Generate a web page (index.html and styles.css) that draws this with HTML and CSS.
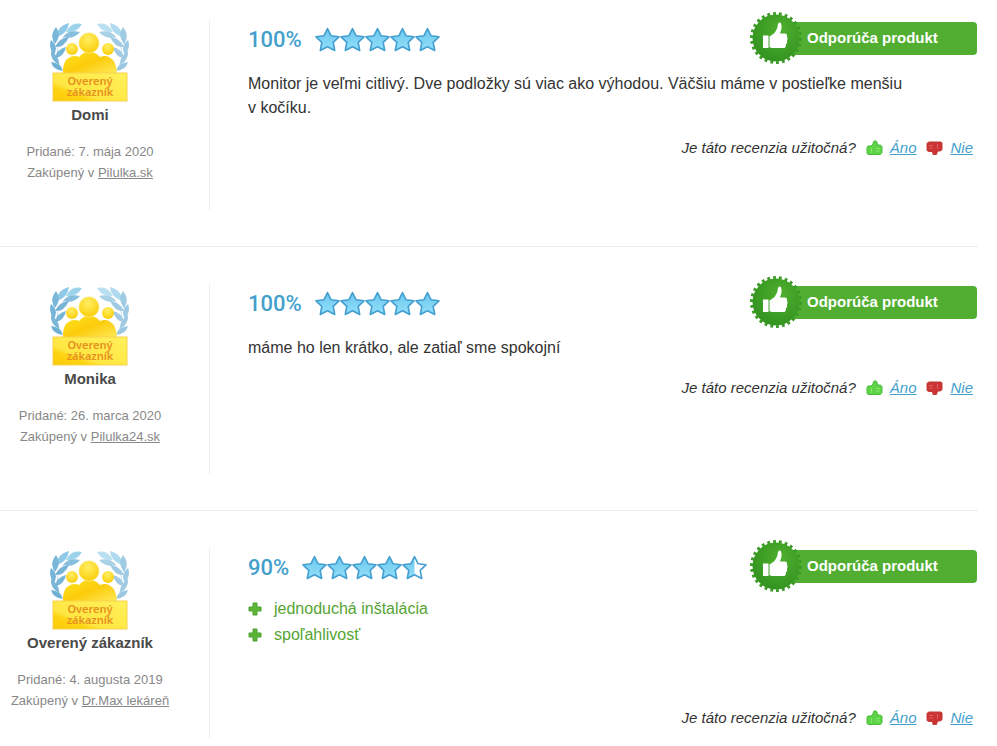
FILE: index.html
```html
<!DOCTYPE html>
<html lang="sk">
<head>
    <meta charset="UTF-8">
    <meta name="viewport" content="width=device-width, initial-scale=1.0">
    <title>Recenzie</title>
    <link rel="stylesheet" href="styles.css">
</head>
<body>
    <svg class="sprite" aria-hidden="true">
        <defs>
            <linearGradient id="star-fill" x1="0" y1="0" x2="0" y2="1">
                <stop offset="0" stop-color="#6cc6ec"/>
                <stop offset="1" stop-color="#93e0fb"/>
            </linearGradient>
            <radialGradient id="seal-fill" cx="0.6" cy="0.35" r="0.75">
                <stop offset="0" stop-color="#4fb02d"/>
                <stop offset="1" stop-color="#2f8f1f"/>
            </radialGradient>
            <radialGradient id="head-fill" cx="0.45" cy="0.3" r="0.8">
                <stop offset="0" stop-color="#ffef62"/>
                <stop offset="1" stop-color="#fbc900"/>
            </radialGradient>
            <linearGradient id="people-fill" x1="0" y1="0" x2="1" y2="1">
                <stop offset="0" stop-color="#ffe21c"/>
                <stop offset="0.5" stop-color="#fccc0c"/>
                <stop offset="1" stop-color="#ffe95a"/>
            </linearGradient>
            <linearGradient id="banner-fill" x1="0" y1="1" x2="1" y2="0">
                <stop offset="0" stop-color="#fcc808"/>
                <stop offset="0.25" stop-color="#fdd412"/>
                <stop offset="0.35" stop-color="#ffe743"/>
                <stop offset="1" stop-color="#fff05a"/>
            </linearGradient>
        </defs>

        <symbol id="star" viewBox="0 0 25 25">
            <path d="M12.500 1.500L16 8.700L24 9.800L18.200 15.300L19.700 23.500L12.500 19.700L5.300 23.500L6.800 15.300L1 9.800L9 8.700Z" fill="url(#star-fill)" stroke="#439fd0" stroke-width="1.600" stroke-linejoin="round"/>
        </symbol>
        <symbol id="star-half" viewBox="0 0 25 25">
            <path d="M12.500 1.500L16 8.700L24 9.800L18.200 15.300L19.700 23.500L12.500 19.700L5.300 23.500L6.800 15.300L1 9.800L9 8.700Z" fill="#fff"/>
            <path d="M12.500 1.500V19.700L5.300 23.500L6.800 15.300L1 9.800L9 8.700Z" fill="url(#star-fill)"/>
            <path d="M12.500 1.500L16 8.700L24 9.800L18.200 15.300L19.700 23.500L12.500 19.700L5.300 23.500L6.800 15.300L1 9.800L9 8.700Z" fill="none" stroke="#439fd0" stroke-width="1.600" stroke-linejoin="round"/>
        </symbol>

        <symbol id="seal" viewBox="0 0 54 54">
            <circle cx="27" cy="27" r="23.500" fill="none" stroke="#3a9a25" stroke-width="5" stroke-dasharray="0.480 0.520" pathLength="26"/>
            <circle cx="27" cy="27" r="23.500" fill="url(#seal-fill)"/>
            <path d="M14 24.500h5.500v12.500h-5.500zM20.500 25.500L25 22.500Q28.500 18.500 29 13Q30.500 10.500 32 12.500Q33.500 16 31 22.500H36.500Q38.500 23 38 25.500Q39 27.500 38 29.500Q38.500 32 37 33.500Q37 36.500 35.500 37H22.500L20.500 36Z" fill="#fff"/>
        </symbol>

        <symbol id="thumb-up" viewBox="0 0 17 16">
            <path d="M1 7.500L2 6H5L7 4L7.500 1.500Q9.500 -0.300 11 2L11.500 5H14.500L16 6.500V12.500L14.500 14.500H2.500L1 13.500Z" fill="#5fd348" stroke="#49bd3b"/>
            <path d="M5.500 8V13M10 8.500H14M10 11H14" stroke="#84e86b" fill="none"/>
        </symbol>
        <symbol id="thumb-down" viewBox="0 0 17 16">
            <path d="M1 8.500V3.500L2.500 2H15L16 3V9.500L14.500 11H11.500L10.500 14.500H7L6.500 11.500H3L1 10.500Z" fill="#cc3333" stroke="#c03a3a"/>
            <path d="M11.500 4V9M3 5.500H7M3 8H7" stroke="#e26060" fill="none"/>
        </symbol>
        <symbol id="plus" viewBox="0 0 14 14">
            <path d="M5 1H9V5H13V9H9V13H5V9H1V5H5Z" fill="#5cb537" stroke="#4fa030" stroke-linejoin="round"/>
        </symbol>

        <g id="laurel">
            <path d="M12 50Q-2 26 24 8" fill="none" stroke="#b8d8e8"/>
            <path d="M18 9Q23 2 32 4Q27 13 16 12Z" fill="#9ed3ec"/>
            <path d="M13 17Q19 9 30 12Q23 20 13 17Z" fill="#86bedc"/>
            <path d="M7 17Q7 6 19 3Q18 13 7 17Z" fill="#8ecae7"/>
            <path d="M5 24Q-1 16 6 7Q12 15 5 24Z" fill="#79b6d8"/>
            <path d="M5 27Q9 18 19 17Q14 28 5 27Z" fill="#78b4d6"/>
            <path d="M4 35Q-2 27 1 20Q9 26 4 35Z" fill="#76b5d9"/>
            <path d="M5 38Q7 29 16 27Q14 37 5 38Z" fill="#78b4d6"/>
            <path d="M9 45Q0 40 1 31Q9 36 9 45Z" fill="#79b6d8"/>
            <path d="M13 51Q3 50 1 42Q11 43 13 51Z" fill="#6fb0d2"/>
        </g>
        <symbol id="verified" viewBox="0 0 80 82">
            <use href="#laurel"/>
            <use href="#laurel" transform="matrix(-1 0 0 1 79 0)" opacity="0.700"/>
            <path d="M13 54Q12 41 20 37Q25 35 29 37Q33 32 39 32Q46 32 50 37Q55 35 59 37Q67 41 67 54Z" fill="url(#people-fill)"/>
            <circle cx="22" cy="29" r="6" fill="url(#head-fill)"/>
            <circle cx="58" cy="29" r="6" fill="url(#head-fill)"/>
            <circle cx="39" cy="23" r="10" fill="url(#head-fill)" stroke="#ffe66a"/>
            <rect x="3" y="53" width="74" height="28" fill="url(#banner-fill)" stroke="#f8d24a"/>
        </symbol>
    </svg>

    <main class="reviews">
        <article class="review">
            <aside class="author">
                <div class="author-badge">
                    <svg class="author-badge-icon"><use href="#verified"/></svg>
                    <span class="author-badge-label">Overený zákazník</span>
                </div>
                <h3 class="author-name">Domi</h3>
                <p class="author-info">Pridané: 7. mája 2020<br>Zakúpený v <a href="#">Pilulka.sk</a></p>
            </aside>
            <div class="content">
                <header class="review-header">
                    <div class="rating">
                        <strong class="percent">100%</strong>
                        <div class="stars">
                            <svg class="star"><use href="#star"/></svg>
                            <svg class="star"><use href="#star"/></svg>
                            <svg class="star"><use href="#star"/></svg>
                            <svg class="star"><use href="#star"/></svg>
                            <svg class="star"><use href="#star"/></svg>
                        </div>
                    </div>
                    <div class="recommend">
                        <svg class="seal"><use href="#seal"/></svg>
                        Odporúča produkt
                    </div>
                </header>
                <p class="text">Monitor je veľmi citlivý. Dve podložky sú viac ako výhodou. Väčšiu máme v postieľke menšiu v&nbsp;kočíku.</p>
                <div class="helpful">
                    <span>Je táto recenzia užitočná?</span>
                    <a class="vote" href="#"><svg class="thumb"><use href="#thumb-up"/></svg><span>Áno</span></a>
                    <a class="vote" href="#"><svg class="thumb"><use href="#thumb-down"/></svg><span>Nie</span></a>
                </div>
            </div>
        </article>

        <article class="review">
            <aside class="author">
                <div class="author-badge">
                    <svg class="author-badge-icon"><use href="#verified"/></svg>
                    <span class="author-badge-label">Overený zákazník</span>
                </div>
                <h3 class="author-name">Monika</h3>
                <p class="author-info">Pridané: 26. marca 2020<br>Zakúpený v <a href="#">Pilulka24.sk</a></p>
            </aside>
            <div class="content">
                <header class="review-header">
                    <div class="rating">
                        <strong class="percent">100%</strong>
                        <div class="stars">
                            <svg class="star"><use href="#star"/></svg>
                            <svg class="star"><use href="#star"/></svg>
                            <svg class="star"><use href="#star"/></svg>
                            <svg class="star"><use href="#star"/></svg>
                            <svg class="star"><use href="#star"/></svg>
                        </div>
                    </div>
                    <div class="recommend">
                        <svg class="seal"><use href="#seal"/></svg>
                        Odporúča produkt
                    </div>
                </header>
                <p class="text">máme ho len krátko, ale zatiaľ sme spokojní</p>
                <div class="helpful">
                    <span>Je táto recenzia užitočná?</span>
                    <a class="vote" href="#"><svg class="thumb"><use href="#thumb-up"/></svg><span>Áno</span></a>
                    <a class="vote" href="#"><svg class="thumb"><use href="#thumb-down"/></svg><span>Nie</span></a>
                </div>
            </div>
        </article>

        <article class="review">
            <aside class="author">
                <div class="author-badge">
                    <svg class="author-badge-icon"><use href="#verified"/></svg>
                    <span class="author-badge-label">Overený zákazník</span>
                </div>
                <h3 class="author-name">Overený zákazník</h3>
                <p class="author-info">Pridané: 4. augusta 2019<br>Zakúpený v <a href="#">Dr.Max lekáreň</a></p>
            </aside>
            <div class="content">
                <header class="review-header">
                    <div class="rating">
                        <strong class="percent">90%</strong>
                        <div class="stars">
                            <svg class="star"><use href="#star"/></svg>
                            <svg class="star"><use href="#star"/></svg>
                            <svg class="star"><use href="#star"/></svg>
                            <svg class="star"><use href="#star"/></svg>
                            <svg class="star"><use href="#star-half"/></svg>
                        </div>
                    </div>
                    <div class="recommend">
                        <svg class="seal"><use href="#seal"/></svg>
                        Odporúča produkt
                    </div>
                </header>
                <ul class="pros">
                    <li><svg class="plus"><use href="#plus"/></svg>jednoduchá inštalácia</li>
                    <li><svg class="plus"><use href="#plus"/></svg>spoľahlivosť</li>
                </ul>
                <div class="helpful">
                    <span>Je táto recenzia užitočná?</span>
                    <a class="vote" href="#"><svg class="thumb"><use href="#thumb-up"/></svg><span>Áno</span></a>
                    <a class="vote" href="#"><svg class="thumb"><use href="#thumb-down"/></svg><span>Nie</span></a>
                </div>
            </div>
        </article>
    </main>
</body>
</html>
```

FILE: styles.css
```css
body {
    font-family: Arial, "Liberation Sans", sans-serif;
    font-size: 16px;
    line-height: 24px;
    color: #333;
    background-color: #fff;
    margin: 0;
}
h3, p, ul {
    margin: 0;
    padding: 0;
}
.sprite {
    position: absolute;
    width: 0;
    height: 0;
}
.reviews {
    margin-right: 19px;
}
.review {
    display: flex;
    gap: 38px;
    padding: 37px 0 36px;
    border-bottom: 1px solid #ececec;
}
.review:first-child {
    padding-top: 20px;
}
.review:last-child {
    padding-bottom: 0;
    border-bottom: none;
}

/* left column */
.author {
    box-sizing: border-box;
    flex: 0 0 210px;
    min-height: 190px;
    padding-right: 29px;
    border-right: 1px solid #ececec;
    text-align: center;
}
.author-badge {
    position: relative;
    width: 80px;
    height: 83px;
    margin: 0 auto;
}
.author-badge-icon {
    display: block;
    width: 80px;
    height: 82px;
}
.author-badge-label {
    position: absolute;
    top: 55px;
    left: 10px;
    width: 60px;
    font-family: "Noto Sans", sans-serif;
    font-size: 11px;
    line-height: 11px;
    font-weight: 600;
    color: #e8901f;
}
.author-name {
    font-size: 15px;
    line-height: 24px;
    color: #4a4a4a;
}
.author-info {
    margin-top: 14px;
    font-size: 13px;
    line-height: 21px;
    color: #888;
}
.author-info a {
    color: inherit;
}

/* right column */
.content {
    flex: 1;
    min-width: 0;
}
.review-header {
    display: flex;
    justify-content: space-between;
    align-items: center;
    height: 37px;
    padding-right: 1px;
}
.rating {
    display: flex;
    align-items: center;
    gap: 13px;
    padding-top: 2px;
}
.percent {
    font-family: Roboto, sans-serif;
    font-size: 22px;
    font-weight: 500;
    color: #439fcb;
}
.stars {
    display: flex;
}
.star {
    width: 25px;
    height: 25px;
}
.recommend {
    position: relative;
    box-sizing: border-box;
    width: 201px;
    padding: 4px 0 5px 31px;
    border-radius: 4px;
    background-color: #52ae30;
    color: #fff;
    font-size: 15px;
    font-weight: bold;
}
.seal {
    position: absolute;
    top: -11px;
    left: -27px;
    width: 54px;
    height: 54px;
}
.text {
    max-width: 690px;
    margin-top: 15px;
}
.pros {
    margin-top: 11px;
    margin-bottom: 58px;
    list-style: none;
    line-height: 26px;
    color: #56a433;
}
.pros li {
    display: flex;
    align-items: center;
    gap: 12px;
}
.plus {
    width: 14px;
    height: 14px;
}
.helpful {
    display: flex;
    justify-content: flex-end;
    align-items: center;
    gap: 10px;
    margin-top: 16px;
    padding-right: 5px;
    font-size: 15px;
    font-style: italic;
}
.vote {
    display: flex;
    align-items: center;
    gap: 7px;
    color: #439fcb;
    text-decoration: none;
}
.vote span {
    text-decoration: underline;
}
.thumb {
    width: 17px;
    height: 16px;
}
```
